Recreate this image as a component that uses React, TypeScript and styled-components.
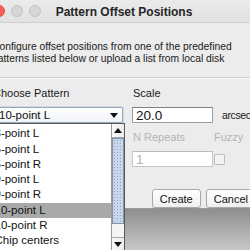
import styled, { createGlobalStyle } from 'styled-components';

const GlobalStyle = createGlobalStyle`
  html, body {
    margin: 0;
    padding: 0;
    background: #c4c4c4;
  }
  * {
    box-sizing: border-box;
  }
`;

const FONT = `"Liberation Sans", Arial, sans-serif`;

// Pattern names shown in the open combo popup.
const PATTERNS = ['3-point L', '5-point L', '5-point R', '9-point L', '9-point R', '10-point L', '10-point R', 'Chip centers'];
const SELECTED = '10-point L';

// Arrow draws the small black triangle used by the combo and scroll buttons.
const Arrow = ({ up }: { up?: boolean }): JSX.Element => (
  <svg width="8" height="5" viewBox="0 0 8 5">
    <polygon points={up ? '0,5 8,5 4,0' : '0,0 8,0 4,5'} fill="#111" />
  </svg>
);

const App = (): JSX.Element => (
  <>
    <GlobalStyle />
    <Viewport>
      <Window>
        <TitleBar>
          <Lights>
            <Light color="#fc5f57" edge="#de4a42" />
            <Light color="#d6d6d6" edge="#c2c2c2" />
            <Light color="#d6d6d6" edge="#c2c2c2" />
          </Lights>
          <Title>Pattern Offset Positions</Title>
          <span />
        </TitleBar>
        <Body>
          <Description>
            Configure offset positions from one of the predefined
            <br />
            patterns listed below or upload a list from local disk
          </Description>
          <Separator />
          <Form>
            <LeftColumn>
              <FieldLabel>Choose Pattern</FieldLabel>
              <Combo>
                <ComboText>{SELECTED}</ComboText>
                <Arrow />
              </Combo>
            </LeftColumn>
            <RightColumn>
              <FieldLabel>Scale</FieldLabel>
              <Row>
                <TextField>20.0</TextField>
                <Unit>arcsec</Unit>
              </Row>
              <LabelRow>
                <FieldLabel disabled width={80}>N Repeats</FieldLabel>
                <FieldLabel disabled>Fuzzy</FieldLabel>
              </LabelRow>
              <Row>
                <TextField disabled>1</TextField>
                <Checkbox />
              </Row>
            </RightColumn>
          </Form>
          <ButtonRow>
            <Button>Create</Button>
            <Button>Cancel</Button>
          </ButtonRow>
        </Body>
      </Window>
      <Desktop />
      <Popup>
        <Items>
          {PATTERNS.map((name) => (
            <Item key={name} selected={name === SELECTED}>
              {name}
            </Item>
          ))}
        </Items>
        <ScrollBar>
          <ScrollButton>
            <Arrow up />
          </ScrollButton>
          <Thumb />
          <Track />
          <ScrollButton bottom>
            <Arrow />
          </ScrollButton>
        </ScrollBar>
      </Popup>
    </Viewport>
  </>
);

export default App;

const Viewport = styled.div`
  position: relative;
  width: 250px;
  height: 250px;
  overflow: hidden;
  display: flex;
  flex-direction: column;
  font-family: ${FONT};
  color: #1a1a1a;
`;

// Window is the dialog; it is wider than the shot and starts left of it.
const Window = styled.div`
  flex: none;
  width: 278px;
  height: 209px;
  margin-left: -15px;
  display: flex;
  flex-direction: column;
  background: #ececec;
  border-bottom: 1px solid #9c9c9c;
`;

const TitleBar = styled.div`
  flex: none;
  height: 23px;
  display: grid;
  grid-template-columns: 1fr auto 1fr;
  align-items: center;
  background: linear-gradient(#ebebeb, #e2e2e2);
  border-bottom: 1px solid #d0d0d0;
`;

const Lights = styled.div`
  display: flex;
  gap: 6px;
  padding-left: 8px;
`;

interface LightProps {
  readonly color: string;
  readonly edge: string;
}
const Light = styled.span<LightProps>`
  width: 12px;
  height: 12px;
  border-radius: 50%;
  background: ${(props): string => props.color};
  border: 0.5px solid ${(props): string => props.edge};
`;

const Title = styled.div`
  font-size: 12px;
  font-weight: bold;
  color: #262626;
  line-height: 14px;
  padding-top: 1px;
`;

const Body = styled.div`
  flex: 1;
  display: flex;
  flex-direction: column;
  padding-left: 7px;
`;

const Description = styled.div`
  padding-top: 18px;
  font-size: 10.3px;
  line-height: 12px;
  white-space: nowrap;
`;

const Separator = styled.div`
  height: 1px;
  margin: 12px 0 0 -7px;
  background: #d2d2d2;
  box-shadow: 0 1px 0 #f6f6f6;
`;

const Form = styled.div`
  display: flex;
  gap: 9px;
  margin-top: 8px;
`;

const LeftColumn = styled.div`
  width: 131px;
  display: flex;
  flex-direction: column;
`;

const RightColumn = styled.div`
  display: flex;
  flex-direction: column;
`;

interface FieldLabelProps {
  readonly disabled?: boolean;
  readonly width?: number;
}
const FieldLabel = styled.div<FieldLabelProps>`
  font-size: 11px;
  line-height: 14px;
  height: 14px;
  margin-left: 1px;
  color: ${(props): string => (props.disabled ? '#b4b4b4' : '#1a1a1a')};
  width: ${(props): string => (props.width ? `${props.width}px` : 'auto')};
  white-space: nowrap;
`;

const Combo = styled.div`
  margin-top: 7px;
  height: 16px;
  display: flex;
  align-items: center;
  justify-content: space-between;
  padding: 0 4px 0 6px;
  background: linear-gradient(#ffffff, #f1f3f6);
  border: 1px solid #98a8bc;
  border-radius: 2px;
  box-shadow: 0 0 0 1px rgba(140, 175, 215, 0.3);
`;

const ComboText = styled.span`
  font-size: 11.5px;
  line-height: 14px;
  color: #111;
`;

const Row = styled.div`
  display: flex;
  align-items: center;
  margin-top: 7px;

  & + & {
    margin-top: 4px;
  }
`;

const LabelRow = styled.div`
  display: flex;
  margin-top: 7px;
`;

interface TextFieldProps {
  readonly disabled?: boolean;
}
const TextField = styled.div<TextFieldProps>`
  width: 81px;
  height: 16px;
  padding-left: 3px;
  font-size: 13.5px;
  line-height: 15px;
  background: #fff;
  border: 1px solid ${(props): string => (props.disabled ? '#c6c6c6' : '#9d9d9d')};
  border-top-color: ${(props): string => (props.disabled ? '#bcbcbc' : '#7f7f7f')};
  color: ${(props): string => (props.disabled ? '#b0b0b0' : '#111')};
`;

const Unit = styled.span`
  margin-left: 9px;
  font-size: 10.5px;
  letter-spacing: -0.4px;
  color: #1a1a1a;
  white-space: nowrap;
`;

const Checkbox = styled.span`
  margin-left: 1px;
  width: 11px;
  height: 11px;
  background: #f3f3f3;
  border: 1px solid #bdbdbd;
  border-radius: 1px;
`;

const ButtonRow = styled.div`
  display: flex;
  justify-content: flex-end;
  gap: 5px;
  margin-top: 22px;
  padding-right: 7px;
`;

const Button = styled.button`
  height: 19px;
  padding: 0 7px;
  font-family: ${FONT};
  font-size: 11px;
  color: #111;
  background: linear-gradient(#ffffff, #efefef);
  border: 1px solid #a8a8a8;
  border-radius: 3px;
  box-shadow: 0 1px 0 rgba(0, 0, 0, 0.06);
`;

// Desktop is the shaded area below the dialog.
const Desktop = styled.div`
  flex: 1;
  background: linear-gradient(#8e8e8e, #c8c8c8);
`;

// Popup is the combo's open list, floating over dialog and desktop.
const Popup = styled.div`
  position: absolute;
  left: -10px;
  top: 123px;
  width: 135px;
  height: 128px;
  display: flex;
  background: #fff;
  border: 1px solid #5a5a5a;
  border-bottom: none;
`;

const Items = styled.div`
  flex: 1;
  padding-top: 2.3px;
`;

interface ItemProps {
  readonly selected?: boolean;
}
const Item = styled.div<ItemProps>`
  height: 15.3px;
  line-height: 15.3px;
  padding-left: 3.5px;
  font-size: 11.5px;
  color: #111;
  white-space: nowrap;
  background: ${(props): string => (props.selected ? '#a9a9a9' : 'transparent')};
`;

const ScrollBar = styled.div`
  width: 13px;
  display: flex;
  flex-direction: column;
  border-left: 1px solid #9a9a9a;
  background: #f2f2f2;
`;

interface ScrollButtonProps {
  readonly bottom?: boolean;
}
const ScrollButton = styled.div<ScrollButtonProps>`
  height: 14px;
  display: flex;
  align-items: center;
  justify-content: center;
  background: linear-gradient(90deg, #fafafa, #ececec);
  border-top: ${(props): string => (props.bottom ? '1px solid #a8a8a8' : 'none')};
  border-bottom: ${(props): string => (props.bottom ? 'none' : '1px solid #a8a8a8')};
`;

const Thumb = styled.div`
  height: 86px;
  border: 1px solid #7f92ab;
  background-color: #c9d7e8;
  background-image: radial-gradient(circle, #8ea3bf 0.7px, transparent 0.9px);
  background-size: 3px 3px;
`;

const Track = styled.div`
  flex: 1;
  background: #f4f4f4;
`;
